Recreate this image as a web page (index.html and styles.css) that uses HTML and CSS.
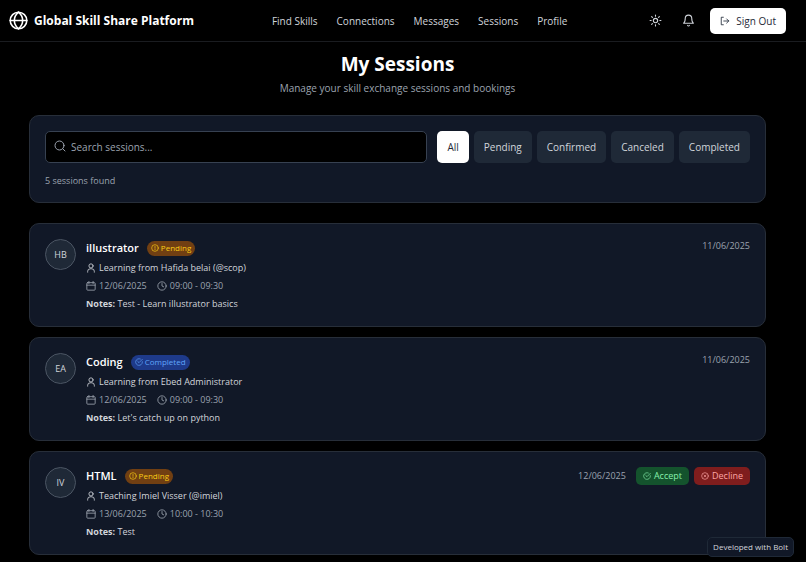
FILE: index.html
```html
<!DOCTYPE html>
<html lang="en">

<head>
    <meta charset="UTF-8">
    <meta name="viewport" content="width=device-width, initial-scale=1.0">
    <title>My Sessions - Global Skill Share Platform</title>
    <link rel="stylesheet" href="styles.css">
</head>

<body>

    <!-- shared icons -->
    <svg class="sprite" aria-hidden="true">
        <symbol id="globe" viewBox="0 0 24 24"><circle cx="12" cy="12" r="10.5" /><path d="M12 1.5c-7 6-7 15 0 21M12 1.5c7 6 7 15 0 21M1.5 12h21" /></symbol>
        <symbol id="sun" viewBox="0 0 24 24"><circle cx="12" cy="12" r="4" /><path d="M12 2v2M12 20v2M4.9 4.9l1.4 1.4M17.7 17.7l1.4 1.4M2 12h2M20 12h2M6.3 17.7l-1.4 1.4M19.1 4.9l-1.4 1.4" /></symbol>
        <symbol id="bell" viewBox="0 0 24 24"><path d="M6 8a6 6 0 0 1 12 0c0 7 3 9 3 9H3s3-2 3-9M10.3 21a1.9 1.9 0 0 0 3.4 0" /></symbol>
        <symbol id="signout" viewBox="0 0 24 24"><path d="M8 3H3v18h5M9 12h12M16 7l5 5-5 5" /></symbol>
        <symbol id="search" viewBox="0 0 24 24"><circle cx="11" cy="11" r="9" /><path d="M22 22l-4.5-4.5" /></symbol>
        <symbol id="user" viewBox="0 0 24 24"><circle cx="12" cy="7" r="5" /><path d="M4 22v-2a6 6 0 0 1 6-6h4a6 6 0 0 1 6 6v2" /></symbol>
        <symbol id="calendar" viewBox="0 0 24 24"><rect x="2" y="4" width="20" height="18" rx="2" /><path d="M7 1v5M17 1v5M2 10h20" /></symbol>
        <symbol id="clock" viewBox="0 0 24 24"><circle cx="12" cy="12" r="10" /><path d="M12 6v6l4 2" /></symbol>
        <symbol id="alert" viewBox="0 0 24 24"><circle cx="12" cy="12" r="10" /><path d="M12 7v6M12 16v1" /></symbol>
        <symbol id="check" viewBox="0 0 24 24"><path d="M22 11v1a10 10 0 1 1-6-9.1M22 4L12 14l-4-4" /></symbol>
        <symbol id="cross" viewBox="0 0 24 24"><circle cx="12" cy="12" r="10" /><path d="M15 9l-6 6M9 9l6 6" /></symbol>
    </svg>

    <header class="topnav">
        <a class="brand" href="/"><svg><use href="#globe" /></svg>Global Skill Share Platform</a>
        <nav class="links">
            <a href="/skills">Find Skills</a>
            <a href="/connections">Connections</a>
            <a href="/messages">Messages</a>
            <a href="/sessions">Sessions</a>
            <a href="/profile">Profile</a>
        </nav>
        <div class="actions">
            <button class="icon-button" type="button" aria-label="Toggle theme"><svg><use href="#sun" /></svg></button>
            <button class="icon-button" type="button" aria-label="Notifications"><svg><use href="#bell" /></svg></button>
            <button class="signout" type="button"><svg><use href="#signout" /></svg>Sign Out</button>
        </div>
    </header>

    <main>
        <h1>My Sessions</h1>
        <p class="subtitle">Manage your skill exchange sessions and bookings</p>

        <section class="card search-card">
            <div class="search-row">
                <label class="search-box">
                    <svg><use href="#search" /></svg>
                    <input type="text" placeholder="Search sessions..." aria-label="Search sessions">
                </label>
                <div class="filters">
                    <button class="filter active" type="button">All</button>
                    <button class="filter" type="button">Pending</button>
                    <button class="filter" type="button">Confirmed</button>
                    <button class="filter" type="button">Canceled</button>
                    <button class="filter" type="button">Completed</button>
                </div>
            </div>
            <p class="count">5 sessions found</p>
        </section>

        <section class="sessions">
            <article class="card session">
                <div class="avatar">HB</div>
                <div class="details">
                    <div class="title">
                        <h2>illustrator</h2>
                        <span class="badge pending"><svg><use href="#alert" /></svg>Pending</span>
                    </div>
                    <p class="person"><svg><use href="#user" /></svg>Learning from Hafida belai (@scop)</p>
                    <p class="when">
                        <span><svg><use href="#calendar" /></svg>12/06/2025</span>
                        <span><svg><use href="#clock" /></svg>09:00 - 09:30</span>
                    </p>
                    <p class="notes"><strong>Notes:</strong> Test - Learn illustrator basics</p>
                </div>
                <div class="side"><span class="created">11/06/2025</span></div>
            </article>

            <article class="card session">
                <div class="avatar">EA</div>
                <div class="details">
                    <div class="title">
                        <h2>Coding</h2>
                        <span class="badge completed"><svg><use href="#check" /></svg>Completed</span>
                    </div>
                    <p class="person"><svg><use href="#user" /></svg>Learning from Ebed Administrator</p>
                    <p class="when">
                        <span><svg><use href="#calendar" /></svg>12/06/2025</span>
                        <span><svg><use href="#clock" /></svg>09:00 - 09:30</span>
                    </p>
                    <p class="notes"><strong>Notes:</strong> Let's catch up on python</p>
                </div>
                <div class="side"><span class="created">11/06/2025</span></div>
            </article>

            <article class="card session">
                <div class="avatar">IV</div>
                <div class="details">
                    <div class="title">
                        <h2>HTML</h2>
                        <span class="badge pending"><svg><use href="#alert" /></svg>Pending</span>
                    </div>
                    <p class="person"><svg><use href="#user" /></svg>Teaching Imiel Visser (@imiel)</p>
                    <p class="when">
                        <span><svg><use href="#calendar" /></svg>13/06/2025</span>
                        <span><svg><use href="#clock" /></svg>10:00 - 10:30</span>
                    </p>
                    <p class="notes"><strong>Notes:</strong> Test</p>
                </div>
                <div class="side">
                    <span class="created">12/06/2025</span>
                    <button class="answer accept" type="button"><svg><use href="#check" /></svg>Accept</button>
                    <button class="answer decline" type="button"><svg><use href="#cross" /></svg>Decline</button>
                </div>
            </article>
        </section>
    </main>

    <a class="bolt" href="/about">Developed with Bolt</a>

</body>

</html>
```
FILE: styles.css
```css
* {
    box-sizing: border-box;
}

body {
    margin: 0;
    background-color: #000;
    color: #d1d5db;
    font-family: "Open Sans", "Noto Sans", sans-serif;
    font-size: 10px;
    line-height: 16px;
}

h1,
h2,
p {
    margin: 0;
}

a {
    color: inherit;
    text-decoration: none;
}

button,
input {
    font: inherit;
    color: inherit;
    border: none;
    padding: 0;
}

button {
    cursor: pointer;
}

svg {
    width: 10px;
    height: 10px;
    flex: none;
    fill: none;
    stroke: currentColor;
    stroke-width: 2;
    stroke-linecap: round;
    stroke-linejoin: round;
}

.sprite {
    display: none;
}

.topnav {
    display: flex;
    align-items: center;
    justify-content: space-between;
    height: 42px;
    padding: 0 20px 0 9px;
    border-bottom: 1px solid #1a1c20;
}

.brand {
    display: flex;
    align-items: center;
    gap: 6px;
    color: #fff;
    font-size: 12px;
    font-weight: 700;
}

.brand svg {
    width: 19px;
    height: 19px;
}

.links {
    display: flex;
    gap: 19px;
    margin-left: 6px;
}

.actions {
    display: flex;
    align-items: center;
}

.icon-button {
    display: flex;
    background: none;
    padding: 10px;
}

.icon-button svg {
    width: 13px;
    height: 13px;
}

.signout {
    display: flex;
    align-items: center;
    gap: 6px;
    height: 26px;
    margin-left: 5px;
    padding: 0 10px;
    border-radius: 5px;
    background-color: #fff;
    color: #1f2937;
}

main {
    padding: 8px 40px 8px 29px;
}

h1 {
    color: #fff;
    font-size: 19px;
    font-weight: 700;
    line-height: 28px;
    text-align: center;
}

.subtitle {
    margin-top: 2px;
    color: #9ca3af;
    text-align: center;
}

.card {
    padding: 15px 15px 13px;
    border: 1px solid #272e39;
    border-radius: 10px;
    background-color: #111827;
}

.search-card {
    margin-top: 19px;
    margin-bottom: 20px;
}

.search-row {
    display: flex;
    gap: 10px;
}

.search-box {
    display: flex;
    flex: 1;
    gap: 5px;
    height: 32px;
    padding: 0 8px;
    border: 1px solid #374151;
    border-radius: 5px;
    background-color: #000;
    color: #9ca3af;
}

.search-box svg {
    width: 12px;
    height: 12px;
    margin-top: 8px;
}

.search-box input {
    flex: 1;
    min-width: 0;
    background: none;
    outline: none;
}

.search-box input::placeholder {
    color: #9ca3af;
    opacity: 1;
}

.filters {
    display: flex;
    gap: 5px;
}

.filter {
    height: 32px;
    padding: 0 10px;
    border-radius: 5px;
    background-color: #1f2937;
}

.filter.active {
    background-color: #fff;
    color: #1f2937;
}

.count {
    margin-top: 10px;
    color: #9ca3af;
    font-size: 9px;
}

.sessions {
    display: flex;
    flex-direction: column;
    gap: 10px;
}

.session {
    display: flex;
    align-items: flex-start;
    gap: 10px;
    font-size: 9px;
}

.avatar {
    display: flex;
    align-items: center;
    justify-content: center;
    width: 31px;
    height: 31px;
    border: 1px solid #4b5563;
    border-radius: 50%;
    background-color: #1f2937;
    font-weight: 500;
}

.details {
    flex: 1;
    line-height: 18px;
}

.title,
.person,
.when,
.when span {
    display: flex;
    align-items: center;
}

.title {
    gap: 8px;
    margin-bottom: 2px;
}

h2 {
    color: #fff;
    font-size: 11px;
    font-weight: 600;
    line-height: 18px;
}

.person,
.when span {
    gap: 3px;
}

.when {
    gap: 10px;
    color: #9ca3af;
}

.badge {
    display: flex;
    align-items: center;
    gap: 2px;
    height: 15px;
    padding: 0 4px;
    border-radius: 8px;
    font-size: 8px;
}

.badge svg {
    width: 8px;
    height: 8px;
}

.pending {
    background-color: #713f12;
    color: #facc15;
}

.completed {
    background-color: #1e3a8a;
    color: #60a5fa;
}

.side {
    display: flex;
    align-items: center;
    gap: 5px;
}

.created {
    color: #9ca3af;
    line-height: 14px;
}

.answer {
    display: flex;
    align-items: center;
    gap: 3px;
    height: 18px;
    padding: 0 7px;
    border-radius: 5px;
}

.accept {
    margin-left: 5px;
    background-color: #14532d;
    color: #86efac;
}

.decline {
    background-color: #7f1d1d;
    color: #fca5a5;
}

.answer svg {
    width: 8px;
    height: 8px;
}

.bolt {
    position: fixed;
    right: 12px;
    bottom: 5px;
    padding: 0 5px;
    border: 1px solid #1f2937;
    border-radius: 5px;
    background-color: #111827;
    font-size: 8px;
    line-height: 18px;
}
```
